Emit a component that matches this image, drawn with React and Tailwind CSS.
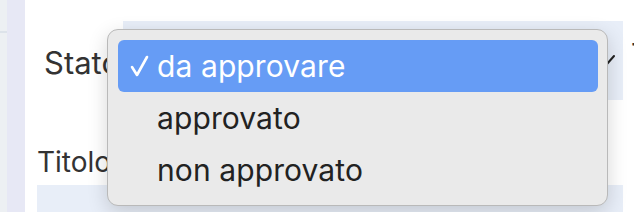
const options = ['da approvare', 'approvato', 'non approvato'];

const App = () => {
  const selected = 'da approvare';

  return (
    <div className="flex w-[634px] h-[212px] overflow-hidden bg-white font-['Inter','Liberation_Sans',sans-serif]">
      {/* sidebar edge */}
      <div className="flex w-[25px] shrink-0">
        <div className="w-[7px] bg-[#edf0f3]">
          <div className="h-[33px] border-b-2 border-[#dde3ea]" />
        </div>
        <div className="flex-1 bg-[#e7e8f5]" />
      </div>

      {/* form */}
      <div className="relative flex-1 flex flex-col">
        <div className="flex items-start pt-[21px]">
          <label className="w-[98px] pl-[19px] pt-[27px] text-[31px] leading-[30px] text-[#333] shrink-0">Stato</label>
          <div className="relative w-[500px] h-[79px] bg-[#e8eef8] shrink-0">
            <svg className="absolute left-[476px] top-[33px]" width="16" height="12" viewBox="0 0 16 12" fill="none">
              <path d="M2 3 L8 10 L15 2" stroke="#222" strokeWidth="2" strokeLinecap="round" strokeLinejoin="round" />
            </svg>
          </div>
          <span className="pl-[8px] pt-[18px] text-[30px] leading-[30px] text-[#333]">T</span>
        </div>

        <div className="flex flex-col pl-[12px] pt-[47px]">
          <label className="text-[28px] leading-[30px] text-[#333]">Titolo</label>
          <div className="mt-[8px] w-[586px] h-[40px] bg-[#e8eef8]" />
        </div>

        {/* native select popup */}
        <div className="absolute left-[82px] top-[29px] w-[501px] h-[177px] rounded-[11px] border border-[#b9b9b9] bg-[#eaeaea] shadow-[0_6px_20px_rgba(0,0,0,0.16)] pt-[10px] pl-[10px] pr-[9px]">
          {options.map((opt) => (
            <div
              key={opt}
              className={`flex items-center h-[52px] rounded-[6px] ${opt === selected ? 'bg-[#669cf5] text-white' : 'text-[#222]'}`}
            >
              <div className="w-[39px] flex justify-center pl-[5px]">
                {opt === selected && (
                  <svg width="20" height="22" viewBox="0 0 20 22" fill="none">
                    <path d="M2 12 L7 20 L17 2" stroke="white" strokeWidth="2.6" strokeLinecap="round" strokeLinejoin="round" />
                  </svg>
                )}
              </div>
              <span className="text-[30px] leading-[52px] tracking-[0.1px]">{opt}</span>
            </div>
          ))}
        </div>
      </div>
    </div>
  );
};

export default App;
